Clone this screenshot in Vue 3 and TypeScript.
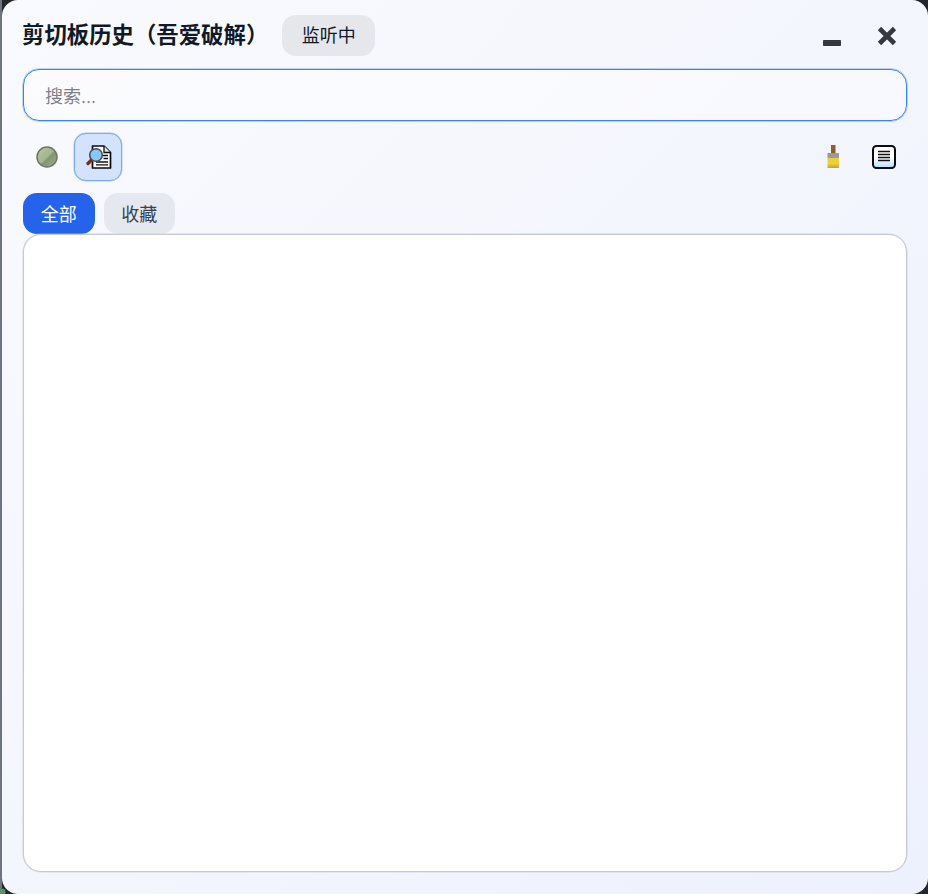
<script setup lang="ts">
const tabs: string[] = ['全部', '收藏']
</script>

<template>
  <div class="desk">
    <div class="win">
      <header class="head">
        <div class="head-left">
          <h1 class="title">剪切板历史（吾爱破解）</h1>
          <span class="pill">监听中</span>
        </div>
        <div class="head-right">
          <svg class="wbtn" width="24" height="24" viewBox="0 0 24 24"><rect x="4" y="16" width="18" height="6" rx="0.8" fill="#35383d" /></svg>
          <svg class="wbtn" width="24" height="24" viewBox="0 0 24 24"><path d="M4.500 4.500 19.500 19.500M19.500 4.500 4.500 19.500" stroke="#35383d" stroke-width="4.600" fill="none" /></svg>
        </div>
      </header>

      <div class="search">搜索...</div>

      <div class="tools">
        <div class="tools-left">
          <button class="tool">
            <svg width="24" height="24" viewBox="0 0 24 24">
              <defs>
                <linearGradient id="gb" x1="0" y1="0" x2="1" y2="1">
                  <stop offset="0" stop-color="#b8c7a4" />
                  <stop offset="0.5" stop-color="#a3b68f" />
                  <stop offset="0.56" stop-color="#82966f" />
                  <stop offset="1" stop-color="#9db08a" />
                </linearGradient>
              </defs>
              <circle cx="12" cy="12" r="10" fill="url(#gb)" stroke="#6c7768" stroke-width="1.500" />
            </svg>
          </button>
          <button class="tool on">
            <svg width="28" height="28" viewBox="0 0 28 28">
              <path d="M8.500 3H20L26.500 9.500V25H8.500Z" fill="#fff" stroke="#0b0b0b" stroke-width="1.700" stroke-linejoin="round" />
              <path d="M20 3V9.500H26.500" fill="#e5e5e5" stroke="#0b0b0b" stroke-width="1.300" />
              <path d="M18.500 12.500H24M19.500 15.500H24M12 19H24M12 21.800H24" stroke="#111" stroke-width="1.300" />
              <path d="M8 16.500 4 20.500" stroke="#7a2a20" stroke-width="3.400" stroke-linecap="round" />
              <circle cx="12" cy="12" r="6.300" fill="#8cc5f8" stroke="#4a4f57" stroke-width="1.600" />
            </svg>
          </button>
        </div>
        <div class="tools-right">
          <button class="tool">
            <svg width="24" height="28" viewBox="0 0 24 28">
              <defs>
                <linearGradient id="br" x1="0" y1="0" x2="0" y2="1">
                  <stop offset="0" stop-color="#e9cd3a" />
                  <stop offset="0.55" stop-color="#ecd23e" />
                  <stop offset="1" stop-color="#c2a42b" />
                </linearGradient>
              </defs>
              <rect x="10" y="2" width="4.500" height="11" fill="#8a5f2a" />
              <rect x="6.500" y="10" width="11.500" height="5" fill="#9a9a96" />
              <rect x="6.500" y="15" width="11.500" height="10" fill="url(#br)" />
            </svg>
          </button>
          <button class="tool">
            <svg width="26" height="26" viewBox="0 0 26 26">
              <defs>
                <linearGradient id="bx" x1="0" y1="0" x2="0" y2="1">
                  <stop offset="0.5" stop-color="#ffffff" />
                  <stop offset="1" stop-color="#b9ddfb" />
                </linearGradient>
              </defs>
              <rect x="2" y="2" width="22" height="22" rx="3.500" fill="url(#bx)" stroke="#0c0c12" stroke-width="2" />
              <path d="M7 7.500H19M7 10.500H19M7 13.500H19M7 16.500H19" stroke="#111" stroke-width="1.600" />
            </svg>
          </button>
        </div>
      </div>

      <nav class="tabs">
        <button v-for="(t, i) in tabs" :key="t" class="tab" :class="{ active: i === 0 }">{{ t }}</button>
      </nav>

      <main class="panel"></main>
    </div>
  </div>
</template>

<style>
html, body { margin: 0; background: #23262b; }
</style>

<style scoped>
.desk {
  width: 928px;
  height: 894px;
  overflow: hidden;
  background:
    radial-gradient(circle at 2px 892px, #4f9a5e 3px, transparent 4px),
    linear-gradient(90deg, #6d7380 2px, #23262b 2px);
}
.win {
  box-sizing: border-box;
  width: 926px;
  height: 894px;
  margin-left: 2px;
  padding: 15px 21px 22px 21px;
  display: flex;
  flex-direction: column;
  border-radius: 16px;
  background: linear-gradient(135deg, #f9fafe 0%, #f4f6fd 50%, #edf1fe 100%);
  font-family: "Liberation Sans", "Noto Sans CJK SC", sans-serif;
  color: #111827;
}
.head {
  display: flex;
  justify-content: space-between;
  align-items: center;
  height: 41px;
}
.head-left { display: flex; align-items: center; gap: 14px; }
.title { margin: 0 0 0 -1px; font-size: 22.400px; line-height: 43px; font-weight: 700; color: #111827; }
.pill {
  box-sizing: border-box;
  width: 93px;
  height: 41px;
  border-radius: 14px;
  background: #e5e7eb;
  font-size: 18px;
  line-height: 43px;
  text-align: center;
}
.head-right { display: flex; gap: 32px; padding-right: 8px; }
.wbtn { display: block; }
.search {
  box-sizing: border-box;
  margin-top: 13px;
  height: 52px;
  padding: 3px 0 0 21px;
  border: 1px solid #3b82f6;
  box-shadow: 0 0 0 0.500px rgba(59, 130, 246, 0.6);
  border-radius: 16px;
  background: rgba(255, 255, 255, 0.4);
  font-size: 18px;
  line-height: 49px;
  color: #7b828c;
}
.tools {
  display: flex;
  justify-content: space-between;
  margin-top: 12px;
  height: 48px;
}
.tools-left, .tools-right { display: flex; gap: 3px; }
.tools-right { margin-right: -1px; }
.tool {
  box-sizing: border-box;
  width: 48px;
  height: 48px;
  padding: 0;
  display: flex;
  align-items: center;
  justify-content: center;
  border: 1px solid transparent;
  border-radius: 12px;
  background: transparent;
}
.tool.on {
  background: #d3e2fd;
  border-color: #7fa8f3;
  box-shadow: 0 0 0 0.500px rgba(127, 168, 243, 0.6);
}
.tabs { display: flex; gap: 9px; margin-top: 12px; }
.tab {
  box-sizing: border-box;
  width: 71.500px;
  height: 41px;
  padding: 0 0 2px;
  border: 0;
  border-radius: 14px;
  background: #e5e9ef;
  color: #374151;
  font-family: inherit;
  font-size: 18px;
}
.tab.active { background: #2563eb; color: #fff; }
.panel {
  flex: 1;
  box-sizing: border-box;
  border: 1px solid #c5cad6;
  box-shadow: 0 0 0 0.500px rgba(197, 202, 214, 0.7);
  border-radius: 18px;
  background: #fff;
}
</style>
